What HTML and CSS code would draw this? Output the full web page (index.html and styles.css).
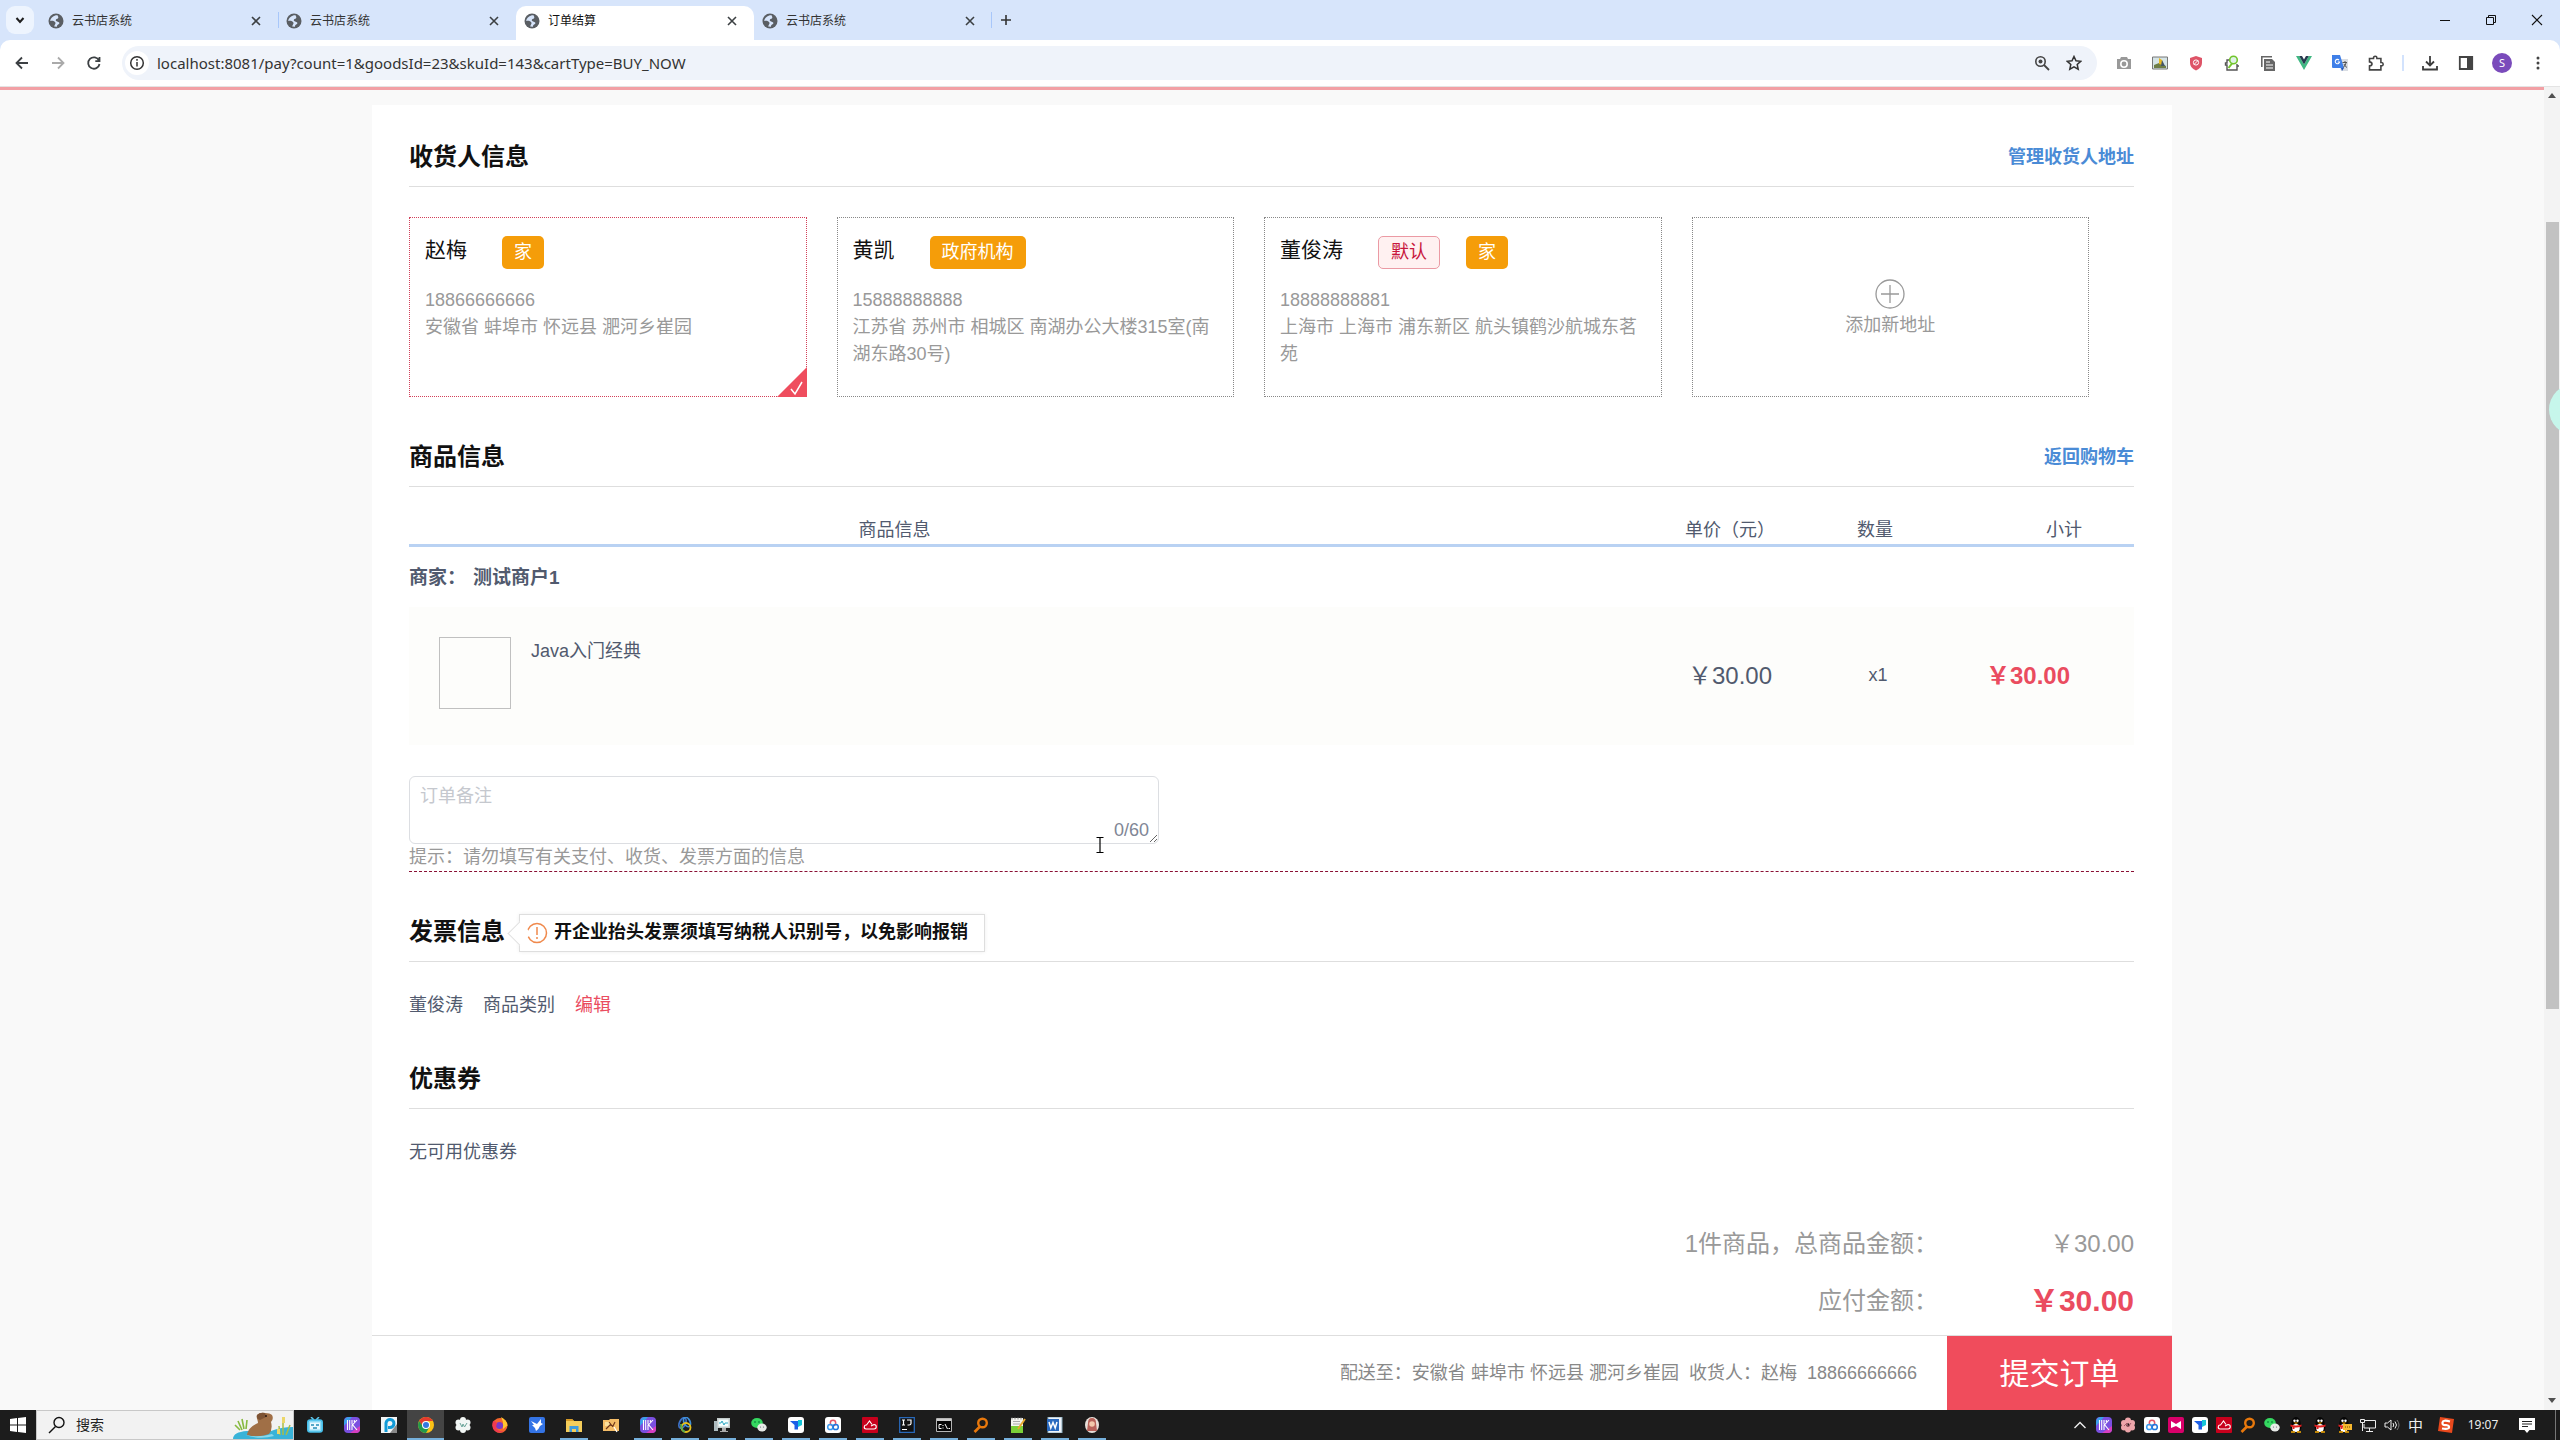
FILE: index.html
```html
<!DOCTYPE html>
<html lang="zh-CN">
<head>
<meta charset="utf-8">
<meta name="viewport" content="width=device-width, initial-scale=1">
<title>订单结算</title>
<link rel="stylesheet" href="styles.css">
</head>
<body>
<svg class="sprite" aria-hidden="true">
  <symbol id="globe" viewBox="0 0 16 16"><circle cx="8" cy="8" r="7.500" fill="#5a5e63"/><path d="M9.500 2.200C6 2 2.600 4.600 2.200 8c2.200-.6 4.300 0 5.200 1.400.6 1.500-.8 1.800-1.200 4.200L9 13.800c0-1.500.300-2 1.500-2.500 1.500-.8 1-2.300-.8-2.600C8 8.300 7.300 7.500 8 6.500c.7-.7 2-.500 2.300-1.700.1-1-.3-1.600-.8-2.600z" fill="#d7e5fb"/></symbol>
  <symbol id="x" viewBox="0 0 16 16"><path d="M4 4l8 8M12 4l-8 8" stroke="#3c4043" stroke-width="1.600"/></symbol>
  <symbol id="maxhub" viewBox="0 0 16 16"><rect width="16" height="16" rx="4" fill="#7a4fe0"/><path d="M0 5a5 5 0 0 1 5-5h3L0 9z" fill="#3aa0ea"/><path d="M16 9v3a4 4 0 0 1-4 4H6z" fill="#d63fc0"/><path d="M3.500 3v10M5.700 3v10M8 3v4l5 6M13 3L8 8.500V13M10.300 3v2" stroke="#fff" stroke-width="1.100" fill="none"/></symbol>
  <symbol id="cloud3" viewBox="0 0 16 16"><rect width="16" height="16" rx="3" fill="#fff"/><g fill="none" stroke-width="1.500"><circle cx="8" cy="6" r="2.700" stroke="#e8566a"/><circle cx="5.300" cy="10" r="2.600" stroke="#3a9af0"/><circle cx="10.700" cy="10" r="2.600" stroke="#2377dd"/></g></symbol>
  <symbol id="bird" viewBox="0 0 16 16"><rect width="16" height="16" rx="3" fill="#fff"/><path d="M2 4h8v8.500H6.500V8z" fill="#1c5fe6"/><path d="M10 3h4v5l-4 2z" fill="#15c5d8"/></symbol>
  <symbol id="redcloud" viewBox="0 0 16 16"><rect width="16" height="16" rx="1" fill="#c8001c"/><path d="M4 12a2 2 0 0 1 .5-4l3-4 2.500 3.500M7 12h5a2.200 2.200 0 0 0 0-4.500L9 9M4 12h4" fill="none" stroke="#fff" stroke-width="1.100"/></symbol>
  <symbol id="lens" viewBox="0 0 16 16"><circle cx="9.500" cy="6" r="4.300" fill="none" stroke="#e8780c" stroke-width="2.400"/><path d="M7 9.500L1.500 15" stroke="#e8780c" stroke-width="2.600"/></symbol>
  <symbol id="wechat" viewBox="0 0 16 16"><ellipse cx="6" cy="6" rx="5.800" ry="5" fill="#35d860"/><circle cx="4" cy="5" r=".8" fill="#063"/><circle cx="8" cy="5" r=".8" fill="#063"/><ellipse cx="11" cy="10.500" rx="4.700" ry="4" fill="#e8ebe8"/><circle cx="9.500" cy="10" r=".6" fill="#667"/><circle cx="12.500" cy="10" r=".6" fill="#667"/></symbol>
  <symbol id="qq" viewBox="0 0 16 16"><ellipse cx="8" cy="6" rx="4.500" ry="6" fill="#050505"/><ellipse cx="8" cy="10" rx="5.500" ry="5" fill="#050505"/><ellipse cx="8" cy="11" rx="3.800" ry="4" fill="#fff"/><circle cx="6.500" cy="3.800" r="1.200" fill="#fff"/><circle cx="9.500" cy="3.800" r="1.200" fill="#fff"/><path d="M5.500 5.500h5L8 7z" fill="#f5a800"/><path d="M2.500 7.500q5.500 2 11 0v2q-5.500 2-11 0zM4.500 9.500h2V12h-2z" fill="#e02020"/><path d="M3 14.300h4v1.500H3zM9 14.300h4v1.500H9z" fill="#f5a800"/></symbol>
</svg>

<header class="browser">
  <div class="tabs">
    <button class="tab-search" aria-label="搜索标签页"><svg viewBox="0 0 16 16"><path d="M4.500 6l3.500 4 3.500-4" fill="none" stroke="#1f1f1f" stroke-width="2"/></svg></button>
    <div class="tab"><svg><use href="#globe"/></svg><span>云书店系统</span><button aria-label="关闭"><svg><use href="#x"/></svg></button></div>
    <div class="tab ruled"><svg><use href="#globe"/></svg><span>云书店系统</span><button aria-label="关闭"><svg><use href="#x"/></svg></button></div>
    <div class="tab active"><svg><use href="#globe"/></svg><span>订单结算</span><button aria-label="关闭"><svg><use href="#x"/></svg></button></div>
    <div class="tab last"><svg><use href="#globe"/></svg><span>云书店系统</span><button aria-label="关闭"><svg><use href="#x"/></svg></button></div>
    <button class="tab-new" aria-label="新标签页"><svg viewBox="0 0 16 16"><path d="M8 3v10M3 8h10" stroke="#333" stroke-width="1.600"/></svg></button>
    <div class="window-controls">
      <button aria-label="最小化"><svg viewBox="0 0 12 12"><path d="M1 6.500h10" stroke="#111"/></svg></button>
      <button aria-label="还原"><svg viewBox="0 0 12 12"><path d="M1.500 3.500h7v7h-7zM3.500 3.500v-2h7v7h-2" fill="none" stroke="#111"/></svg></button>
      <button aria-label="关闭"><svg viewBox="0 0 12 12"><path d="M1 1l10 10M11 1L1 11" stroke="#111" stroke-width="1.100"/></svg></button>
    </div>
  </div>
  <div class="toolbar">
    <div class="nav">
      <button aria-label="后退"><svg viewBox="0 0 16 16"><path d="M14 8H3M8 2.500L2.500 8 8 13.500" fill="none" stroke="#3c4043" stroke-width="1.800"/></svg></button>
      <button aria-label="前进"><svg viewBox="0 0 16 16"><path d="M2 8h11M8 2.500L13.500 8 8 13.500" fill="none" stroke="#aaa" stroke-width="1.800"/></svg></button>
      <button aria-label="刷新"><svg viewBox="0 0 16 16"><path d="M13 5.500A5.700 5.700 0 1 0 13.500 9M13.500 2v4.200H9.300" fill="none" stroke="#3c4043" stroke-width="1.800"/></svg></button>
    </div>
    <div class="omnibox">
      <svg class="site-info" viewBox="0 0 24 24"><circle cx="12" cy="12" r="12" fill="#fff"/><circle cx="12" cy="12" r="6.300" fill="none" stroke="#333" stroke-width="1.500"/><path d="M12 11v4.500M12 8v1.700" stroke="#333" stroke-width="1.500"/></svg>
      <input class="url" type="text" aria-label="地址" value="localhost:8081/pay?count=1&amp;goodsId=23&amp;skuId=143&amp;cartType=BUY_NOW">
      <button aria-label="缩放"><svg viewBox="0 0 16 16"><circle cx="6.500" cy="6.500" r="4.700" fill="none" stroke="#444" stroke-width="1.600"/><circle cx="6.500" cy="6.500" r="2" fill="#444"/><path d="M10 10l5 5" stroke="#444" stroke-width="1.800"/></svg></button>
      <button aria-label="收藏"><svg viewBox="0 0 16 16"><path d="M8 1.500l2 4.300 4.700.5-3.500 3.200 1 4.700L8 11.800l-4.200 2.400 1-4.700L1.300 6.300 6 5.800z" fill="none" stroke="#333" stroke-width="1.500"/></svg></button>
    </div>
    <div class="extensions">
      <button aria-label="截图"><svg viewBox="0 0 16 16"><path d="M1 4h3l1-2h6l1 2h3v10H1z" fill="#999"/><circle cx="8" cy="9" r="3.200" fill="#999" stroke="#fff" stroke-width="1.600"/></svg></button>
      <button aria-label="图片"><svg viewBox="0 0 16 16"><path d="M.5 2h15v12H.5z" fill="#d5e4e6" stroke="#777"/><path d="M2 10l5-2 7 3v2H2z" fill="#6e7d46"/><path d="M7 9V3l3 2 1 5z" fill="#e8b820"/><path d="M10 5l3 6H9z" fill="#456"/></svg></button>
      <button aria-label="拦截"><svg viewBox="0 0 16 16"><path d="M8 1l6 2v5q0 5-6 7.500Q2 13 2 8V3z" fill="#de5467"/><circle cx="8" cy="7.500" r="2.600" fill="none" stroke="#fff"/><path d="M6 9.500l4-4" stroke="#fff"/></svg></button>
      <button aria-label="查找"><svg viewBox="0 0 16 16"><path d="M5 5H3v3H1.500v2H3v5h10v-4h2M13 11V9" fill="none" stroke="#555" stroke-width="1.400"/><circle cx="9.500" cy="5" r="3.800" fill="#dff2e8" stroke="#72c52c" stroke-width="1.600"/><path d="M8 8.500L4.500 13" stroke="#72c52c" stroke-width="2"/></svg></button>
      <button aria-label="复制"><svg viewBox="0 0 16 16"><path d="M1.800 12V1.800H12" fill="none" stroke="#666" stroke-width="1.600"/><path d="M4 4h8l3 3v9H4z" fill="#666"/><path d="M6 7h4M6 10h7M6 13h7" stroke="#fff" stroke-width="1.200"/></svg></button>
      <button aria-label="Vue"><svg viewBox="0 0 16 16"><path d="M0 1h3.200L8 9.500 12.800 1H16L8 15z" fill="#41b883"/><path d="M3.200 1H6l2 3.400L10 1h2.800L8 9.500z" fill="#26394e"/></svg></button>
      <button aria-label="翻译"><svg viewBox="0 0 16 16"><path d="M6 4h10v12H9z" fill="#d9dde3"/><path d="M0 0h8l4 13H1a1 1 0 0 1-1-1z" fill="#3f7fe8"/><path d="M9 13h3l-2 3z" fill="#2354b8"/><path d="M10.500 7.500h4.500M13 6v1.500M14 8q-.5 3-3 4.500M12 9q1 2.500 3 3.500" stroke="#555" fill="none"/><path d="M7 5a2.200 2.200 0 1 0 .6 2H5.700" fill="none" stroke="#fff" stroke-width="1.100"/></svg></button>
      <button aria-label="扩展程序"><svg viewBox="0 0 16 16"><path d="M1.500 3.500h4V3a1.700 1.700 0 0 1 3.400 0v.5h4v4h.6a1.700 1.700 0 0 1 0 3.400h-.6v4H1.500v-4q2.500-.3 2.500-2t-2.500-2z" fill="none" stroke="#444" stroke-width="1.600"/></svg></button>
      <i class="rule"></i>
      <button aria-label="下载"><svg viewBox="0 0 16 16"><path d="M8 1v9M4 6.500L8 10.500l4-4M1 11v3.500h14V11" fill="none" stroke="#3c3c3c" stroke-width="1.800"/></svg></button>
      <button aria-label="侧边栏"><svg viewBox="0 0 16 16"><path d="M1.800 2h12.400v12H1.800z" fill="none" stroke="#444" stroke-width="1.800"/><path d="M9 2h5v12H9z" fill="#444"/></svg></button>
      <button aria-label="用户" class="avatar">S</button>
      <button aria-label="菜单"><svg viewBox="0 0 16 16"><g fill="#444"><circle cx="8" cy="3" r="1.500"/><circle cx="8" cy="8" r="1.500"/><circle cx="8" cy="13" r="1.500"/></g></svg></button>
    </div>
  </div>
</header>

<div class="viewport">
  <div class="page">
    <main class="checkout">
      <div class="body">
        <section>
          <div class="head"><h2>收货人信息</h2><a href="#address">管理收货人地址</a></div>
          <div class="cards">
            <button class="card selected">
              <span class="who"><span class="name">赵梅</span><span class="tag">家</span></span>
              <span class="line">18866666666</span><span class="line">安徽省 蚌埠市 怀远县 淝河乡崔园</span>
              <svg class="tick" viewBox="0 0 30 30"><path d="M30 0v30H0z" fill="#ef4d5e"/><path d="M14 22l4 5 7-12" fill="none" stroke="#fff" stroke-width="1.500"/></svg>
            </button>
            <button class="card">
              <span class="who"><span class="name">黄凯</span><span class="tag">政府机构</span></span>
              <span class="line">15888888888</span><span class="line">江苏省 苏州市 相城区 南湖办公大楼315室(南湖东路30号)</span>
            </button>
            <button class="card">
              <span class="who"><span class="name">董俊涛</span><span class="tag default">默认</span><span class="tag">家</span></span>
              <span class="line">18888888881</span><span class="line">上海市 上海市 浦东新区 航头镇鹤沙航城东茗苑</span>
            </button>
            <button class="card add">
              <svg viewBox="0 0 30 30"><circle cx="15" cy="15" r="14" fill="none" stroke="#999" stroke-width="1.300"/><path d="M15 6v18M6 15h18" stroke="#999" stroke-width="1.300"/></svg>
              <span class="line">添加新地址</span>
            </button>
          </div>
        </section>

        <section id="goods">
          <div class="head"><h2>商品信息</h2><a href="#cart">返回购物车</a></div>
          <table class="goods">
            <thead><tr><th class="c-item">商品信息</th><th class="c-price">单价（元）</th><th class="c-count">数量</th><th class="c-sum">小计</th></tr></thead>
            <tbody>
              <tr class="shop"><td colspan="4"><span>商家：</span><span>测试商户1</span></td></tr>
              <tr class="item"><td><div class="product"><span class="thumb"></span><span>Java入门经典</span></div></td><td class="price">￥30.00</td><td class="count">x1</td><td class="sum">￥30.00</td></tr>
            </tbody>
          </table>
          <div class="remark">
            <div class="field"><textarea placeholder="订单备注" aria-label="订单备注"></textarea><span class="counter">0/60</span></div>
            <p>提示：请勿填写有关支付、收货、发票方面的信息</p>
          </div>
        </section>

        <section>
          <div class="head"><h2>发票信息</h2>
            <div class="notice"><svg viewBox="0 0 22 22"><circle cx="11" cy="11" r="9.500" fill="none" stroke="#f0894c" stroke-width="1.500"/><path d="M11 5v8M11 15v2" stroke="#f0894c" stroke-width="1.500"/></svg>开企业抬头发票须填写纳税人识别号，以免影响报销</div>
          </div>
          <div class="invoice"><span>董俊涛</span><span>商品类别</span><a href="#invoice">编辑</a></div>
        </section>

        <section>
          <div class="head"><h2>优惠券</h2></div>
          <div class="invoice">无可用优惠券</div>
        </section>

        <dl class="totals">
          <dt>1件商品，总商品金额：</dt><dd>￥30.00</dd>
          <dt>应付金额：</dt><dd class="due">￥30.00</dd>
        </dl>
      </div>
      <footer class="submit">
        <span>配送至：安徽省 蚌埠市 怀远县 淝河乡崔园&nbsp; 收货人：赵梅&nbsp; 18866666666</span>
        <button>提交订单</button>
      </footer>
    </main>
  </div>
  <div class="scrollbar">
    <svg viewBox="0 0 8 5"><path d="M4 0l4 5H0z" fill="#505050"/></svg>
    <i></i>
    <svg viewBox="0 0 8 5"><path d="M0 0h8L4 5z" fill="#505050"/></svg>
  </div>
  <span class="bubble"></span>
  <svg class="caret" viewBox="0 0 8 18"><path d="M.500 1.500h7M.500 16.500h7M4 1.500v15" stroke="#000" stroke-width="1.200"/></svg>
</div>

<div class="taskbar">
  <button class="start" aria-label="开始"><svg viewBox="0 0 16 16"><path d="M0 2l7-1v6.500H0zM8 .9L16 0v7.500H8zM0 8.500h7V15l-7-1zM8 8.500h8V16l-8-1z" fill="#fff"/></svg></button>
  <label class="find">
    <svg class="find-icon" viewBox="0 0 18 18"><circle cx="11" cy="6.500" r="5" fill="none" stroke="#111" stroke-width="1.400"/><path d="M7.500 10.500L1 17" stroke="#111" stroke-width="1.400"/></svg>
    <input type="text" placeholder="搜索" aria-label="搜索">
    <svg class="capy" viewBox="0 0 60 28"><path d="M0 28q0-7 14-8h24q10-4 22-4v12z" fill="#39b3d8"/><path d="M9 19L5 10M11 18L9 8M13 18l1-9M7 19L2 14" stroke="#86b93f" stroke-width="1.600"/><path d="M14 24c1-6 5-9 11-12 0-3-2-5-1-8q3-3 8-2 5 0 7 2 2 4-1 7 2 7-2 12-10 4-22 1z" fill="#a06f46"/><path d="M24 4q3-3 8-2l1 4-6 3q-4-1-3-5z" fill="#7d5334"/><circle cx="33" cy="5" r="1" fill="#2a1710"/><path d="M12 24q14 3 27-1l2 2q-14 4-29-1z" fill="#8bd8ea"/><path d="M47 24l-1-9M50 24V8M53 24l4-10" stroke="#a9bd45" stroke-width="1.500"/><path d="M49 6h3v6h-3zM44 18h3v5h-3z" fill="#ecd76a"/></svg>
  </label>
  <div class="apps">
    <button aria-label="哔哩哔哩"><svg viewBox="0 0 16 16"><path d="M4 0l3 3M12 0L9 3" stroke="#5fc8ee" stroke-width="1.500"/><rect x=".8" y="3" width="14.400" height="12" rx="2.500" fill="#8fdcf7" stroke="#47bfea" stroke-width="1.600"/><path d="M3 5.500h10v7H3z" fill="#e9f9ff"/><path d="M4 8h3M9 8h3M6 11h4" stroke="#268db8" stroke-width="1.300"/></svg></button>
    <button aria-label="MAXHUB"><svg><use href="#maxhub"/></svg></button>
    <button aria-label="P"><svg viewBox="0 0 16 16"><path d="M0 0h16v16H0z" fill="#f2f5f6"/><path d="M16 7v9H9z" fill="#888"/><path d="M5 15V6a4 4 0 1 1 4 4.500H7" fill="none" stroke="#129bd8" stroke-width="3"/></svg></button>
    <button aria-label="Chrome" class="open on"><svg viewBox="0 0 16 16"><circle cx="8" cy="8" r="8" fill="#fbc116"/><path d="M1.100 4A8 8 0 0 1 15 4H8L5 10z" fill="#e33b2e"/><path d="M1.100 4A8 8 0 0 0 8 16l3.500-6L5 9.500z" fill="#229a4c"/><circle cx="8" cy="8" r="4" fill="#fff"/><circle cx="8" cy="8" r="3" fill="#3478e0"/></svg></button>
    <button aria-label="助手"><svg viewBox="0 0 16 16"><g fill="#f2f7f5"><circle cx="8" cy="3" r="3"/><circle cx="3.500" cy="5.500" r="3"/><circle cx="12.500" cy="5.500" r="3"/><circle cx="3.500" cy="10.500" r="3"/><circle cx="12.500" cy="10.500" r="3"/><circle cx="8" cy="13" r="3"/><circle cx="8" cy="8" r="4"/></g><path d="M5 6l2 4 1-3 1.500 3L12 6" fill="none" stroke="#6aa59a"/></svg></button>
    <button aria-label="Firefox"><svg viewBox="0 0 16 16"><circle cx="8" cy="8.500" r="7.500" fill="#f6652d"/><path d="M9 0q6 3 6.500 8.500L11 12V5z" fill="#ffc52e"/><circle cx="7.500" cy="8.500" r="3.600" fill="#7a3ac8"/><path d="M1 4q3 0 4 2l-1 4q1 5 8 4-5 3-9 0T1 4z" fill="#f03a50"/></svg></button>
    <button aria-label="飞鸟"><svg viewBox="0 0 16 16"><rect width="16" height="16" rx="2" fill="#3474e6"/><path d="M2 4l6 3 4-5v4l2 1-3 2q-1 3-4 5l-1-3-3-3 2 0z" fill="#fff"/></svg></button>
    <button aria-label="文件资源管理器" class="open"><svg viewBox="0 0 16 16"><path d="M0 2h6l2 2h8v11H0z" fill="#f5cd5a"/><path d="M0 2h6l2 2H0z" fill="#d69a26"/><path d="M3.500 15V9h9v6H10v-3H6v3z" fill="#3f9bdc"/></svg></button>
    <button aria-label="地图"><svg viewBox="0 0 16 16"><path d="M0 3h6l1-1h9v12H0z" fill="#f4bd68"/><path d="M2 5h5v4H2z" fill="#fbdf9c"/><path d="M3 12l4-4 3 1 2-4M6 5l4 5" stroke="#6b3319" stroke-width="1.100" fill="none"/><path d="M11 10l3 5" stroke="#fff" stroke-width="1.300"/></svg></button>
    <button aria-label="MAXHUB" class="open"><svg><use href="#maxhub"/></svg></button>
    <button aria-label="Navicat" class="open"><svg viewBox="0 0 16 16"><g fill="none" stroke-width="1.800"><ellipse cx="5.500" cy="6" rx="3" ry="5.500" stroke="#3d72c8" transform="rotate(25 5.500 6)"/><ellipse cx="10" cy="5" rx="3" ry="5" stroke="#3f8fd8" transform="rotate(-25 10 5)"/><circle cx="9" cy="10.500" r="4.500" stroke="#e6c01c"/><path d="M4 7q0 6 4 8" stroke="#57ad4c"/></g></svg></button>
    <button aria-label="监视器" class="open"><svg viewBox="0 0 16 16"><path d="M0 4h4v10H0z" fill="#aebcc0"/><path d="M3 1h13v10H3z" fill="#c4cccc"/><path d="M4.500 2.500h10v7h-10z" fill="#f5ffff"/><path d="M5 6h2l1-2 2 4 1-2h3" fill="none" stroke="#2fa8c4"/><path d="M8 11h4v3h2v1H6v-1h2z" fill="#aaa"/></svg></button>
    <button aria-label="微信" class="open"><svg><use href="#wechat"/></svg></button>
    <button aria-label="飞书" class="open"><svg><use href="#bird"/></svg></button>
    <button aria-label="网盘" class="open"><svg><use href="#cloud3"/></svg></button>
    <button aria-label="云" class="open"><svg><use href="#redcloud"/></svg></button>
    <button aria-label="IDEA" class="open"><svg viewBox="0 0 16 16"><path d="M.7.700h14.600v14.600H.7z" fill="#111" stroke="#2868b8" stroke-width="1.300"/><path d="M3 3h3M4.500 3v5M3 8h3M8 3h4v3.500Q12 8 10 8H8.500M3 12.500h5" fill="none" stroke="#fff" stroke-width="1.200"/></svg></button>
    <button aria-label="命令提示符" class="open"><svg viewBox="0 0 16 16"><path d="M.5 1.500h15v13H.5z" fill="#050505" stroke="#b5b5b5"/><path d="M1 2h14v2H1z" fill="#ccc"/><path d="M5.500 7.500H3v4h2.500M7 8v1M7 10.500v1M9 7l2.500 5M12.500 11.500H14" fill="none" stroke="#fff"/></svg></button>
    <button aria-label="搜索工具" class="open"><svg><use href="#lens"/></svg></button>
    <button aria-label="Notepad++" class="open"><svg viewBox="0 0 16 16"><path d="M1 1h12v15H1z" fill="#f5f5f0"/><path d="M1 9h12v7H1z" fill="#7bd038"/><path d="M2 .500v2M5 .500v2M8 .500v2M11 .500v2" stroke="#888"/><path d="M3 4.500h7M3 7h7" stroke="#aaa"/><path d="M15 2L8 12" stroke="#e8a92d" stroke-width="2"/></svg></button>
    <button aria-label="Word" class="open"><svg viewBox="0 0 16 16"><path d="M1 0h14v16H1z" fill="#eff4fb" stroke="#8ab"/><path d="M0 2h12v12H0z" fill="#2a6abf"/><path d="M2 5l1.800 6L6 5.500 8.200 11 10 5" fill="none" stroke="#fff" stroke-width="1.500"/></svg></button>
    <button aria-label="头像" class="open"><svg viewBox="0 0 16 16"><ellipse cx="8" cy="8" rx="7" ry="8" fill="#e8e0da"/><path d="M4 6q0-5 4-5t4 5l1 8H3z" fill="#b8625a"/><circle cx="8" cy="7" r="2.800" fill="#f3c9ac"/></svg></button>
  </div>
  <div class="tray">
    <button aria-label="展开"><svg viewBox="0 0 16 16"><path d="M2.500 11L8 5.500l5.500 5.500" fill="none" stroke="#eee" stroke-width="1.400"/></svg></button>
    <svg><use href="#maxhub"/></svg>
    <svg viewBox="0 0 16 16"><g fill="#eda5aa"><circle cx="8" cy="3.500" r="3"/><circle cx="4" cy="6" r="3"/><circle cx="12" cy="6" r="3"/><circle cx="4" cy="10.500" r="3"/><circle cx="12" cy="10.500" r="3"/><circle cx="8" cy="12.500" r="3"/></g><path d="M4 9l3-3 1 4 3-4" fill="none" stroke="#a55a68"/></svg>
    <svg><use href="#cloud3"/></svg>
    <svg viewBox="0 0 16 16"><rect width="16" height="16" rx="2" fill="#d9006a"/><path d="M3 4l5 3 5-3v8L8 9l-5 2z" fill="#fff"/></svg>
    <svg><use href="#bird"/></svg>
    <svg><use href="#redcloud"/></svg>
    <svg><use href="#lens"/></svg>
    <svg><use href="#wechat"/></svg>
    <svg><use href="#qq"/></svg>
    <svg><use href="#qq"/></svg>
    <svg viewBox="0 0 16 16"><use href="#qq"/><path d="M7 7h9v6h-5l-2 2v-2H7z" fill="#f7b82e"/><path d="M9 10h5" stroke="#7a4d00" stroke-dasharray="1 1"/></svg>
    <svg viewBox="0 0 16 16"><path d="M5 3.500h10.500v7.500H4V7M9.500 11v3.500M6 14.500h7M.500 2.500h4v3h-4zM2.500 5.500V14" fill="none" stroke="#eee"/></svg>
    <svg viewBox="0 0 16 16"><path d="M1 6h2.500L7 3v10L3.500 10H1zM9 6q1.500 2 0 4M11 4.500q3 3.500 0 7" fill="none" stroke="#eee"/><path d="M13 3q4 5 0 10" fill="none" stroke="#777"/></svg>
    <span class="ime">中</span>
    <svg class="sogou" viewBox="0 0 16 16"><path d="M2 0l14 2-2 14L0 14z" fill="#e8491d"/><path d="M12 4.500Q5 2.500 4.500 5.500T8 8q3.500.500 3 2.500T4 11.500" fill="none" stroke="#fff" stroke-width="2.200"/></svg>
    <time>19:07</time>
    <button class="notify" aria-label="通知"><svg viewBox="0 0 16 16"><path d="M0 1h16v12h-5.500L8 16l-2.500-3H0z" fill="#fff"/><path d="M3 4.500h10M3 7h10M3 9.500h6" stroke="#222"/></svg></button>
  </div>
</div>
</body>
</html>
```
FILE: styles.css
```css
* { box-sizing: border-box; }
body {
  margin: 0;
  min-height: 100vh;
  display: flex;
  flex-direction: column;
  background: #f9f9f9;
  color: #515a6e;
  font: 18px/27px "Liberation Sans", "Noto Sans CJK SC", sans-serif;
}
button, input, textarea { font: inherit; color: inherit; border: 0; background: none; padding: 0; margin: 0; }
a { text-decoration: none; color: #4a8bd6; }
svg { display: block; flex: none; width: 16px; height: 16px; }
.sprite { position: absolute; width: 0; height: 0; }

/* browser frame */
.browser { background: #d7e5fb; color: #333; font: 12px/20px "Noto Sans", "Noto Sans CJK SC", sans-serif; }
.tabs { display: flex; align-items: center; height: 40px; padding-left: 6px; }
.tab-search { width: 28px; height: 28px; border-radius: 9px; background: #edf4fe; display: grid; place-items: center; margin-right: 6px; }
.tab { display: flex; align-items: center; gap: 8px; width: 238px; height: 34px; padding: 0 14px 4px 8px; align-self: flex-end; }
.tab span { flex: 1; line-height: 18px; }
.tab.active { background: #fff; border-radius: 10px 10px 0 0; color: #111; }
.tab.ruled { background: linear-gradient(#a8c7fa, #a8c7fa) 0 6px / 1px 16px no-repeat; }
.tab.last { background: linear-gradient(#a8c7fa, #a8c7fa) 100% 6px / 1px 16px no-repeat; }
.tab-new { margin-left: 6px; }
.window-controls { display: flex; margin-left: auto; }
.window-controls button { width: 46px; display: grid; place-items: center; }
.window-controls svg { width: 12px; height: 12px; }
.toolbar { display: flex; align-items: center; height: 47px; background: #fff; border-radius: 10px 10px 0 0; border-bottom: 1px solid #e4e4e4; padding: 0 4px; }
.nav { display: flex; width: 118px; }
.nav button { width: 36px; display: grid; place-items: center; }
.omnibox { flex: 1; display: flex; align-items: center; height: 34px; border-radius: 17px; background: #eff3fa; padding: 0 15px 0 3px; gap: 16px; }
.site-info { width: 24px; height: 24px; }
.url { flex: 1; font-size: 15px; color: #333; margin-left: -8px; }
.extensions { display: flex; align-items: center; margin-left: 9px; }
.extensions button { width: 36px; display: grid; place-items: center; }
.extensions .rule { width: 2px; height: 16px; background: #d3e3fd; margin: 0 8px; }
.extensions .avatar { width: 20px; height: 20px; border-radius: 50%; background: #7a4bbb; color: #fff; font-size: 11px; margin: 0 8px; }

/* page area */
.viewport { flex: 1; display: flex; position: relative; overflow: hidden; }
.page { flex: 1; border-top: 3px solid #f2a0a5; padding-top: 15px; display: flex; flex-direction: column; align-items: center; }
.checkout { flex: 1; width: 100%; max-width: 1800px; background: #fff; display: flex; flex-direction: column; justify-content: space-between; }
.body { padding: 34px 38px 16px 37px; }
section + section { margin-top: 42px; }
.head { display: flex; align-items: center; min-height: 48px; padding-bottom: 11px; border-bottom: 1px solid #dedede; margin-bottom: 30px; }
.head h2 { margin: 0; font-size: 24px; line-height: 36px; color: #111; }
.head > a { margin-left: auto; font-weight: 700; }

.cards { display: grid; grid-template-columns: repeat(4, 1fr); gap: 30px; padding-right: 45px; }
.card { position: relative; min-height: 180px; padding: 18px 15px; border: 1px dotted #888; color: #999; text-align: left; display: flex; flex-direction: column; }
.card.selected { border-color: #d2405a; }
.who { display: flex; align-items: flex-start; margin-bottom: 18px; }
.name { color: #111; font-size: 21px; line-height: 28px; margin-right: 35px; }
.tag { height: 33px; padding: 0 12px; border-radius: 5px; background: #f59d09; color: #fff; line-height: 33px; margin-right: 26px; }
.tag.default { background: #fff1f1; color: #c8173c; border: 1px solid #eb9aa4; line-height: 31px; }
.tick { position: absolute; right: -1px; bottom: -1px; width: 30px; height: 30px; }
.card.add { align-items: center; justify-content: center; gap: 3px; padding: 20px 15px 16px; }
.card.add svg { width: 30px; height: 30px; }

.goods { width: 100%; border-collapse: collapse; table-layout: fixed; }
.goods th { font-weight: 400; padding: 0; height: 27px; }
.goods td { padding: 0; }
.goods thead { border-bottom: 3px solid #b9d2f3; }
.goods .c-item { padding-right: 274px; }
.goods .c-price { width: 152px; }
.goods .c-count { width: 138px; }
.goods .c-sum { width: 190px; text-align: left; padding-left: 102px; }
.goods .shop td { height: 61px; font-size: 19px; font-weight: 700; padding-top: 1px; }
.shop span { margin-right: 7px; }
.item { background: #fdfdfb; text-align: center; }
.item td { height: 138px; }
.item .count { padding-left: 6px; }
.product { display: flex; gap: 20px; height: 78px; padding-left: 30px; text-align: left; line-height: 28px; }
.thumb { width: 72px; height: 72px; border: 1px solid #c0c0c0; }
.price, .sum { font-size: 24px; }
.item .sum { text-align: left; padding-left: 42px; color: #ea4c5f; font-weight: 700; }

.remark { margin-top: 31px; border-bottom: 1px dashed #8a1034; color: #999; }
.field { position: relative; width: 750px; max-width: 100%; }
.remark textarea { display: block; width: 100%; height: 68px; border: 1px solid #dcdee2; border-radius: 6px; padding: 6px 10px; }
.remark textarea::placeholder { color: #c5c8ce; }
.counter { position: absolute; right: 10px; bottom: 0; color: #808695; }
.remark p { margin: 0; }

.notice { position: relative; display: flex; align-items: center; gap: 6px; height: 38px; margin: 0 0 -2px 14px; padding: 0 16px 0 6px; border: 1px solid #dedede; box-shadow: 0 0 4px #eee; color: #111; font-weight: 700; }
.notice svg { width: 22px; height: 22px; }
.notice::before { content: ""; position: absolute; left: -9px; top: 10px; width: 16px; height: 16px; background: #fff; border: solid #e2e2e2; border-width: 0 0 1px 1px; transform: rotate(45deg); }
.invoice { display: flex; gap: 20px; }
.invoice a { color: #ea4c5f; }

.totals { display: grid; grid-template-columns: 1fr 196px; row-gap: 21px; margin: 60px 0 0; text-align: right; font-size: 24px; line-height: 36px; color: #999; }
.totals dd { margin: 0; }
.totals .due { font-size: 30px; font-weight: 700; color: #ea4c5f; }
.submit { display: flex; align-items: center; justify-content: flex-end; height: 75px; border-top: 1px solid #dedede; color: #888; }
.submit button { width: 225px; height: 100%; margin-left: 30px; background: #f04c5c; color: #fff; font-size: 30px; }

.scrollbar { width: 16px; padding: 6px 0 7px; background: #f3f3f3; display: flex; flex-direction: column; align-items: center; }
.scrollbar svg { width: 8px; height: 5px; }
.scrollbar i { width: 13px; flex: 0 1 787px; margin: 124px 0 auto; background: #c2c2c2; }
.bubble { position: absolute; right: -40px; top: 297px; width: 51px; height: 51px; border-radius: 50%; background: #c6f6eb; }
.caret { position: absolute; left: 1096px; top: 749px; width: 8px; height: 18px; }

/* taskbar */
.taskbar { display: flex; align-items: center; height: 30px; background: #1c1c1c; color: #eee; font: 14px/20px "Noto Sans", "Noto Sans CJK SC", sans-serif; }
.start { width: 36px; display: grid; place-items: center; }
.find { display: flex; align-items: center; width: 258px; height: 30px; background: #f2f2f2; border: 1px solid #c8c8c8; color: #222; padding-left: 11px; }
.find-icon { width: 18px; height: 18px; }
.find input { flex: 1; min-width: 0; margin-left: 10px; }
.find input::placeholder { color: #222; }
.capy { width: 60px; height: 28px; }
.apps { display: flex; height: 30px; margin-left: 2px; }
.apps button { width: 37px; display: grid; place-items: center; }
.apps .open { background: linear-gradient(#76b0dc, #76b0dc) center bottom / 28px 2px no-repeat; }
.apps .on { background-color: #444; background-size: 37px 2px; }
.tray { display: flex; align-items: center; gap: 8px; height: 30px; margin-left: auto; padding-right: 20px; margin-right: 4px; border-right: 1px solid #777; }
.tray .sogou { margin-left: 6px; }
.ime { width: 16px; font-size: 15px; }
.tray time { width: 34px; margin: 0 11px 0 4px; font-size: 12px; text-align: center; }
```
